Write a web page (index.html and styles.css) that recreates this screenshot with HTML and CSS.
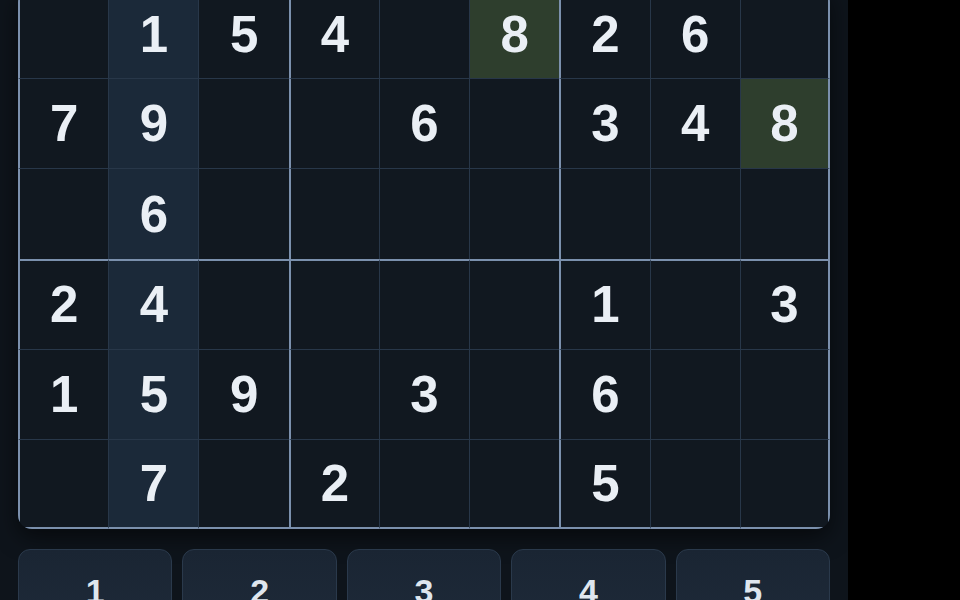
FILE: index.html
```html
<!DOCTYPE html>
<html lang="en">
<head>
<meta charset="utf-8">
<title>Sudoku</title>
<link rel="stylesheet" href="styles.css">
</head>
<body>
<main class="card">
  <div class="board">
    <div class="cell box-top box-left"></div>
    <div class="cell box-top hl">1</div>
    <div class="cell box-top">5</div>
    <div class="cell box-top box-left">4</div>
    <div class="cell box-top"></div>
    <div class="cell box-top match">8</div>
    <div class="cell box-top box-left">2</div>
    <div class="cell box-top">6</div>
    <div class="cell box-top last-col"></div>

    <div class="cell box-left">7</div>
    <div class="cell hl">9</div>
    <div class="cell"></div>
    <div class="cell box-left"></div>
    <div class="cell">6</div>
    <div class="cell"></div>
    <div class="cell box-left">3</div>
    <div class="cell">4</div>
    <div class="cell match last-col">8</div>

    <div class="cell box-left"></div>
    <div class="cell hl">6</div>
    <div class="cell"></div>
    <div class="cell box-left"></div>
    <div class="cell"></div>
    <div class="cell"></div>
    <div class="cell box-left"></div>
    <div class="cell"></div>
    <div class="cell last-col"></div>

    <div class="cell box-top box-left">2</div>
    <div class="cell box-top hl">4</div>
    <div class="cell box-top"></div>
    <div class="cell box-top box-left"></div>
    <div class="cell box-top"></div>
    <div class="cell box-top"></div>
    <div class="cell box-top box-left">1</div>
    <div class="cell box-top"></div>
    <div class="cell box-top last-col">3</div>

    <div class="cell box-left">1</div>
    <div class="cell hl">5</div>
    <div class="cell">9</div>
    <div class="cell box-left"></div>
    <div class="cell">3</div>
    <div class="cell"></div>
    <div class="cell box-left">6</div>
    <div class="cell"></div>
    <div class="cell last-col"></div>

    <div class="cell box-left last-row"></div>
    <div class="cell hl last-row">7</div>
    <div class="cell last-row"></div>
    <div class="cell box-left last-row">2</div>
    <div class="cell last-row"></div>
    <div class="cell last-row"></div>
    <div class="cell box-left last-row">5</div>
    <div class="cell last-row"></div>
    <div class="cell last-col last-row"></div>
  </div>

  <div class="pad">
    <button class="key">1</button>
    <button class="key">2</button>
    <button class="key">3</button>
    <button class="key">4</button>
    <button class="key">5</button>
  </div>
</main>
</body>
</html>
```

FILE: styles.css
```css
* { box-sizing: border-box; }

html, body {
  margin: 0;
  height: 100%;
  background: #000;
  overflow: hidden;
}

body {
  font-family: "Liberation Sans", Arial, sans-serif;
  color: #e9eef4;
}

.card {
  width: 848px;
  min-height: 100%;
  background: #0e141b;
  padding: 0 18px;
}

.board {
  margin-top: -12px;
  width: 812px;
  display: grid;
  grid-template-columns: repeat(9, 1fr);
  border-radius: 14px;
  overflow: hidden;
  background: #111820;
  box-shadow: 0 8px 22px rgba(0, 0, 0, 0.55);
}

.cell {
  aspect-ratio: 1 / 1;
  display: flex;
  align-items: center;
  justify-content: center;
  font-size: 51px;
  font-weight: 700;
  line-height: 1;
  color: #eaeff5;
  background: #111820;
  border-top: 1px solid #283749;
  border-left: 1px solid #283749;
}

.cell.box-top { border-top: 2px solid #7b90ad; }
.cell.box-left { border-left: 2px solid #7b90ad; }
.cell.last-col { border-right: 2px solid #7b90ad; }
.cell.last-row { border-bottom: 2px solid #7b90ad; }

.cell.hl { background: #1b2939; }
.cell.match { background: #2e3e2d; }

.pad {
  margin-top: 20px;
  display: grid;
  grid-template-columns: repeat(5, 1fr);
  gap: 10px;
  width: 812px;
}

.key {
  height: 84px;
  border-radius: 12px;
  border: 1px solid #2a394b;
  background: linear-gradient(180deg, #1a2533 0%, #1e2a39 100%);
  color: #dfe6ee;
  font-family: "Liberation Sans", Arial, sans-serif;
  font-size: 34px;
  font-weight: 700;
  display: flex;
  align-items: center;
  justify-content: center;
  padding: 0;
}
```
